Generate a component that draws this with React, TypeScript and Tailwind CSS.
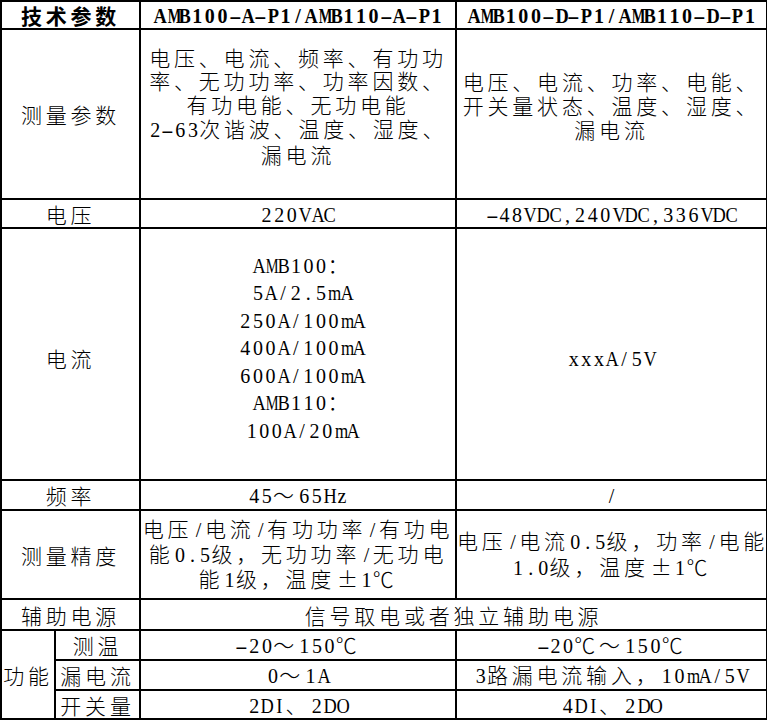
import React from "react"

// the original uses a song-style font: latin chars sit in half-width cells, CJK in full-width ones
function Latin({ s }: { s: string }) {
  return (
    <>
      {s.split("").map((c, i) => {
        let cls = "inline-block w-[12.6px] text-center leading-[0px]"
        if (c === "M" || c === "W") cls += " scale-x-[0.72]"
        else if (c === "-") cls += " scale-x-[1.9]"
        else if (c === "m" || c === "w") cls += " scale-x-[0.85]"
        else if (/[A-Z]/.test(c)) cls += " scale-x-[0.92]"
        return (
          <span key={i} className={cls}>
            {c === " " ? "\u00a0" : c}
          </span>
        )
      })}
    </>
  )
}

function Txt({ s }: { s: string }) {
  const parts = s.match(/[\x20-\x7e]+|±|[^\x20-\x7e±]+/g) ?? []
  return (
    <>
      {parts.map((p, i) =>
        /^[\x20-\x7e]+$/.test(p) ? (
          <span key={i} className="font-['Liberation_Serif',serif] text-[20px] tracking-normal">
            <Latin s={p} />
          </span>
        ) : p === "±" ? (
          <span key={i} className="inline-block w-[25px] text-center leading-[0px]">
            ±
          </span>
        ) : (
          <span key={i} className="tracking-[3.8px]">
            {p}
          </span>
        )
      )}
    </>
  )
}

function Lines({ lines, className = "" }: { lines: string[]; className?: string }) {
  return (
    <div className={className}>
      {lines.map((l, i) => (
        <div key={i} className="whitespace-pre">
          <Txt s={l} />
        </div>
      ))}
    </div>
  )
}

const td = "border-2 border-black p-0 text-center align-middle whitespace-nowrap"

export default function App() {
  return (
    <div className="min-h-[721px] w-[767px] bg-white text-black font-['Noto_Sans_CJK_SC',sans-serif] text-[21px] leading-[22px] font-light">
      <table className="w-[766px] table-fixed border-collapse">
        <colgroup>
          <col className="w-[54px]" />
          <col className="w-[85px]" />
          <col className="w-[316px]" />
          <col className="w-[311px]" />
        </colgroup>
        <tbody>
          <tr className="h-[28px] font-bold">
            <td colSpan={2} className={td}>
              <Txt s="技术参数" />
            </td>
            <td className={td}>
              <Txt s="AMB100-A-P1/AMB110-A-P1" />
            </td>
            <td className={td}>
              <Txt s="AMB100-D-P1/AMB110-D-P1" />
            </td>
          </tr>

          <tr className="h-[170px]">
            <td colSpan={2} className={td}>
              <Txt s="测量参数" />
            </td>
            <td className={td}>
              <Lines
                className="leading-[23.75px] pb-4"
                lines={[
                  "电压、电流、频率、有功功",
                  "率、无功功率、功率因数、",
                  "有功电能、无功电能",
                  "2-63次谐波、温度、湿度、",
                  "漏电流",
                ]}
              />
            </td>
            <td className={td}>
              <Lines
                className="leading-[23.75px] pb-4"
                lines={["电压、电流、功率、电能、", "开关量状态、温度、湿度、", "漏电流"]}
              />
            </td>
          </tr>

          <tr className="h-[29px]">
            <td colSpan={2} className={td}>
              <Txt s="电压" />
            </td>
            <td className={td}>
              <Txt s="220VAC" />
            </td>
            <td className={td}>
              <Txt s="-48VDC,240VDC,336VDC" />
            </td>
          </tr>

          <tr className="h-[252px]">
            <td colSpan={2} className={`${td} pt-2`}>
              <Txt s="电流" />
            </td>
            <td className={td}>
              <Lines
                className="leading-[25.5px] pb-3 pl-2"
                lines={[
                  "AMB100：",
                  "5A/2.5mA",
                  "250A/100mA",
                  "400A/100mA",
                  "600A/100mA",
                  "AMB110：",
                  "100A/20mA",
                ]}
              />
            </td>
            <td className={`${td} pt-2`}>
              <Txt s="xxxA/5V" />
            </td>
          </tr>

          <tr className="h-[30px]">
            <td colSpan={2} className={td}>
              <Txt s="频率" />
            </td>
            <td className={td}>
              <Txt s="45～65Hz" />
            </td>
            <td className={td}>
              <Txt s="/" />
            </td>
          </tr>

          <tr className="h-[89px]">
            <td colSpan={2} className={td}>
              <Txt s="测量精度" />
            </td>
            <td className={td}>
              <Lines
                className="leading-[22.7px]"
                lines={["电压/电流/有功功率/有功电", "能0.5级，无功功率/无功电", "能1级，温度±1℃"]}
              />
            </td>
            <td className={td}>
              <Lines
                className="leading-[23.7px]"
                lines={["电压/电流0.5级，功率/电能", "1.0级，温度±1℃"]}
              />
            </td>
          </tr>

          <tr className="h-[31px]">
            <td colSpan={2} className={td}>
              <Txt s="辅助电源" />
            </td>
            <td colSpan={2} className={td}>
              <Txt s="信号取电或者独立辅助电源" />
            </td>
          </tr>

          <tr className="h-[30px]">
            <td rowSpan={3} className={td}>
              <Txt s="功能" />
            </td>
            <td className={td}>
              <Txt s="测温" />
            </td>
            <td className={td}>
              <Txt s="-20～150℃" />
            </td>
            <td className={td}>
              <Txt s="-20℃～150℃" />
            </td>
          </tr>
          <tr className="h-[30px]">
            <td className={td}>
              <Txt s="漏电流" />
            </td>
            <td className={td}>
              <Txt s="0～1A" />
            </td>
            <td className={td}>
              <Txt s="3路漏电流输入，10mA/5V" />
            </td>
          </tr>
          <tr className="h-[29px]">
            <td className={td}>
              <Txt s="开关量" />
            </td>
            <td className={td}>
              <Txt s="2DI、2DO" />
            </td>
            <td className={td}>
              <Txt s="4DI、2DO" />
            </td>
          </tr>
        </tbody>
      </table>
    </div>
  )
}
